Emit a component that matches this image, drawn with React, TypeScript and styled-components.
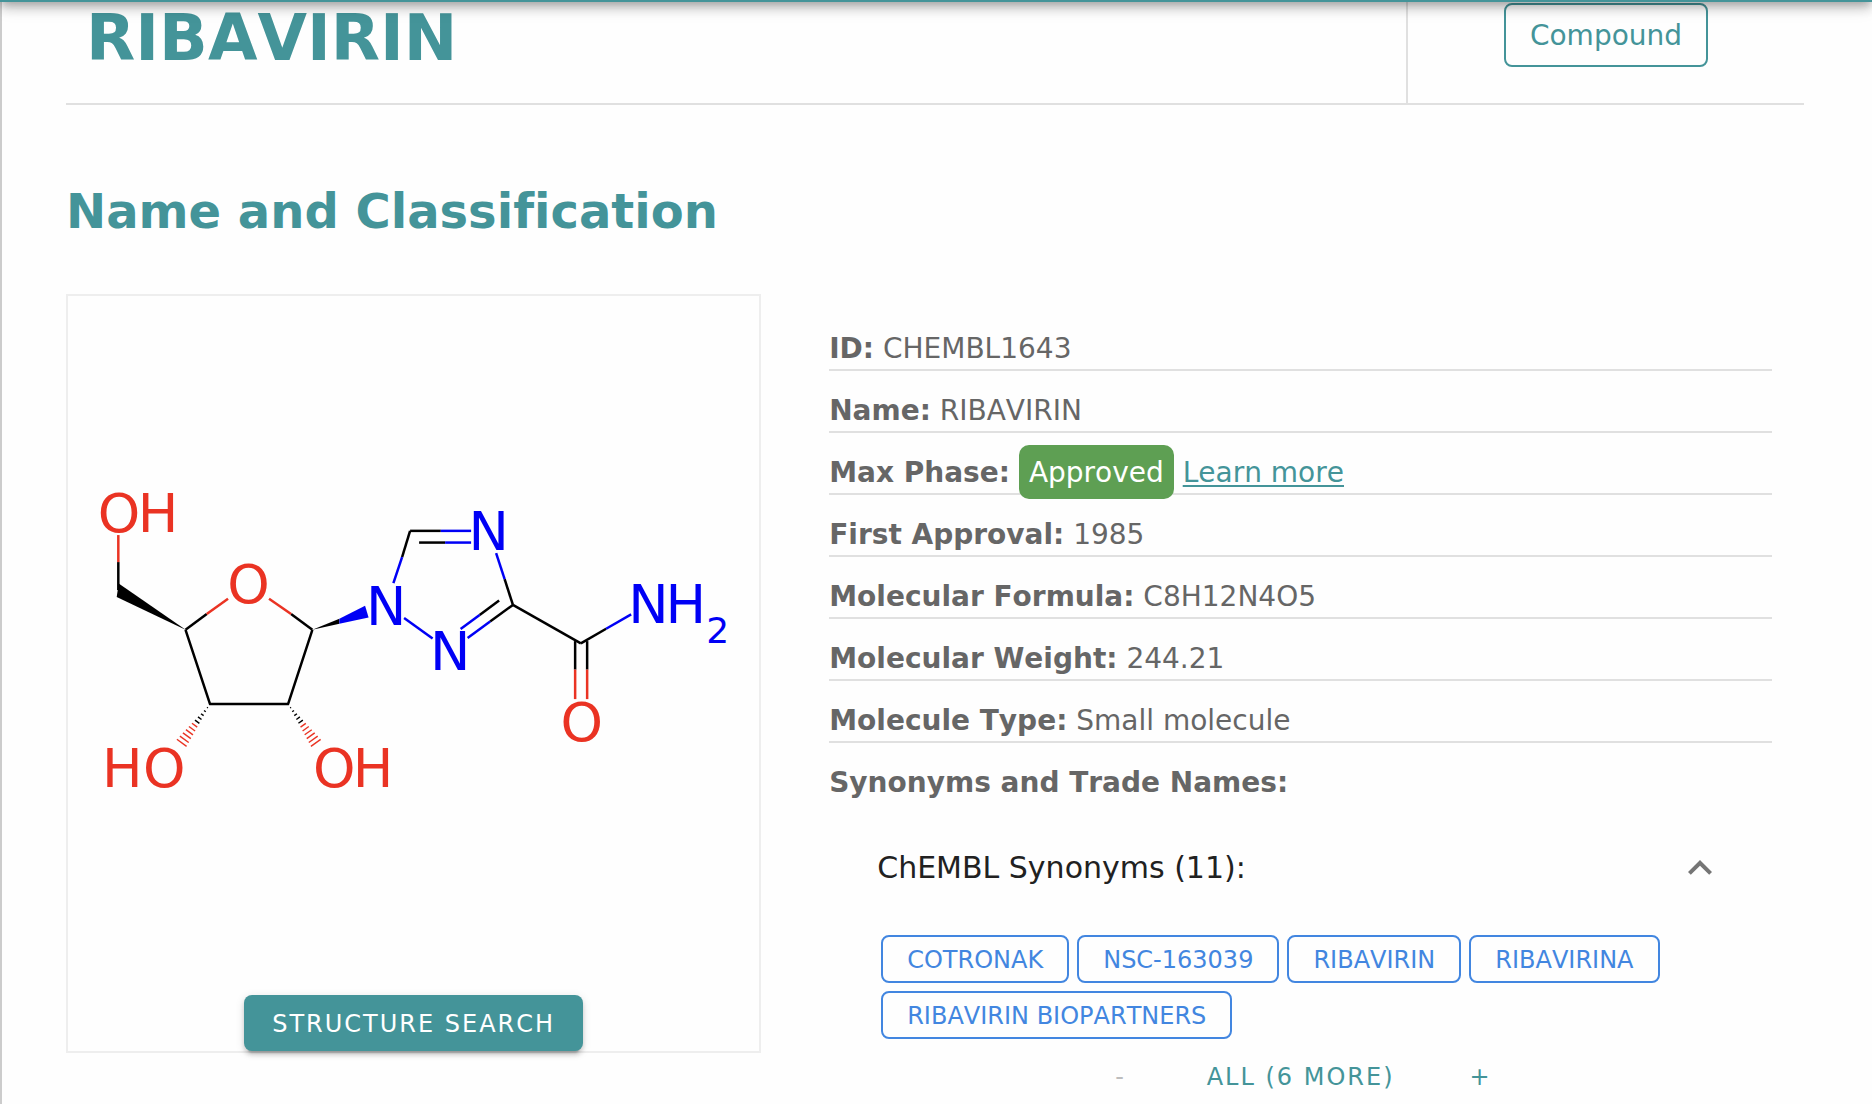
import React, { useState } from "react";
import styled, { createGlobalStyle } from "styled-components";

const teal = "#449499";
const blue = "#4286e0";
const line = "#e0e0e0";

const GlobalStyle = createGlobalStyle`
  *, *::before, *::after { box-sizing: border-box; }
  body {
    margin: 0;
    background: #fefefe;
    color: #666;
    font-family: Verdana, "DejaVu Sans", sans-serif;
    font-size: 28px;
    line-height: 40px;
    font-kerning: none;
    font-variant-ligatures: none;
    overflow-x: hidden;
  }
`;

const TopBar = styled.div`
  position: fixed;
  top: -110px;
  left: 0;
  right: 0;
  height: 112px;
  z-index: 2;
  background: ${teal};
  box-shadow:
    0 4px 8px -2px rgba(0, 0, 0, 0.2),
    0 8px 10px 0 rgba(0, 0, 0, 0.14),
    0 2px 20px 0 rgba(0, 0, 0, 0.12);
`;

const Page = styled.main`
  min-height: 100vh;
  padding: 0 68px 0 64px;
  border-left: 2px solid #cccccc;
`;

const Header = styled.header`
  display: flex;
  border-bottom: 2px solid ${line};
`;

const Title = styled.h1`
  flex: 1;
  margin: 0;
  padding: 2px 20px 29px;
  color: ${teal};
  font-size: 64px;
  line-height: 72px;
`;

const HeaderSide = styled.div`
  display: flex;
  justify-content: center;
  align-items: flex-start;
  width: 398px;
  padding-top: 3px;
  border-left: 2px solid ${line};
`;

const EntityButton = styled.button`
  height: 64px;
  padding: 2px 24px 0;
  border: 2px solid ${teal};
  border-radius: 8px;
  background: transparent;
  color: ${teal};
  font: inherit;
`;

const SectionTitle = styled.h2`
  margin: 76px 0 53px;
  color: ${teal};
  font-size: 48px;
  line-height: 60px;
`;

const Columns = styled.div`
  display: grid;
  grid-template-columns: 40% 60%;
  align-items: start;
`;

const StructureCard = styled.section`
  display: flex;
  flex-direction: column;
  align-items: center;
  gap: 8px;
  border: 2px solid #eeeeee;
`;

const Drawing = styled.svg`
  display: block;
  width: 100%;
  font-family: "DejaVu Sans", sans-serif;
  font-size: 54px;
`;

const SearchButton = styled.button`
  height: 56px;
  padding: 2px 28px 0;
  border: 0;
  border-radius: 8px;
  background: ${teal};
  color: #fff;
  font: inherit;
  font-size: 24px;
  letter-spacing: 2px;
  box-shadow:
    0 6px 2px -4px rgba(0, 0, 0, 0.2),
    0 4px 4px 0 rgba(0, 0, 0, 0.14),
    0 2px 10px 0 rgba(0, 0, 0, 0.12);
`;

const Details = styled.section`
  padding: 15px 32px 0 68px;
`;

const Fields = styled.dl`
  margin: 0;
`;

const Field = styled.div`
  padding-top: 20px;
  border-bottom: 2px solid ${line};
  white-space: nowrap;
`;

const Label = styled.dt`
  display: inline;
  font-weight: bold;
`;

const Value = styled.dd`
  display: inline;
  margin: 0;
`;

const Phase = styled.span`
  padding: 11px 10px 10px;
  border-radius: 10px;
  background: #5e9f53;
  color: #fff;
`;

const Link = styled.a`
  color: ${teal};
  text-underline-offset: 3px;
  text-decoration-thickness: 2px;
`;

const SynonymsTitle = styled.h3`
  margin: 0;
  padding-top: 20px;
  font-size: 28px;
  line-height: 40px;
`;

const PanelToggle = styled.button`
  display: flex;
  justify-content: space-between;
  align-items: center;
  width: 100%;
  height: 96px;
  margin-top: 16px;
  padding: 2px 48px 0;
  border: 0;
  background: none;
  color: #212121;
  font: inherit;
  font-size: 30px;
  text-align: left;
`;

const Chevron = styled.svg<{ $open: boolean }>`
  width: 48px;
  height: 48px;
  fill: #757575;
  transform: ${(p) => (p.$open ? "none" : "rotate(180deg)")};
`;

const Chips = styled.div`
  display: flex;
  flex-wrap: wrap;
  gap: 8px;
  padding: 20px 52px 16px;
`;

const Chip = styled.button`
  height: 48px;
  padding: 2px 24px 0;
  border: 2px solid ${blue};
  border-radius: 8px;
  background: transparent;
  color: ${blue};
  font: inherit;
  font-size: 24px;
`;

const Pager = styled.div`
  display: flex;
  justify-content: center;
`;

const PagerButton = styled.button<{ $wide?: boolean }>`
  width: ${(p) => (p.$wide ? "232px" : "128px")};
  height: 40px;
  padding: 2px 0 0;
  border: 0;
  background: none;
  color: ${teal};
  font: inherit;
  font-size: 24px;
  letter-spacing: 2px;
  &:disabled { color: #bdbdbd; }
`;

type Bond = [number, number, number, number];

const carbonBonds: Bond[] = [
  [118.3, 562, 118.3, 590],
  [185.5, 629.7, 206.7, 614],
  [291, 614, 312.3, 629.7],
  [410, 530.8, 402, 557],
  [410, 530.8, 440.7, 530.8],
  [419, 542.5, 445, 542.5],
  [504.5, 579, 512.8, 604.8],
  [512.8, 604.8, 490, 621.5],
  [499, 600.5, 479.5, 615],
  [512.8, 604.8, 580.7, 643.3],
  [580.7, 643.3, 606, 628.7],
  [575, 641, 575, 669.5],
  [587, 641, 587, 669.5],
];
const oxygenBonds: Bond[] = [
  [118.3, 535, 118.3, 562],
  [206.7, 614, 228, 598.7],
  [269, 598.7, 291, 614],
  [575, 669.5, 575, 699],
  [587, 669.5, 587, 699],
];
const nitrogenBonds: Bond[] = [
  [402, 557, 393.3, 583],
  [440.7, 530.8, 471, 530.8],
  [445, 542.5, 471, 542.5],
  [496, 553, 504.5, 579],
  [490, 621.5, 467.5, 638],
  [479.5, 615, 460.5, 629],
  [404, 618, 432.5, 638.5],
  [606, 628.7, 631, 614.3],
];

const Bonds = ({ items, color }: { items: Bond[]; color: string }) => (
  <g stroke={color} strokeWidth="2.5" strokeLinecap="butt">
    {items.map(([x1, y1, x2, y2], i) => (
      <line key={i} x1={x1} y1={y1} x2={x2} y2={y2} />
    ))}
  </g>
);

const HashedBond = ({ x1, y1, x2, y2 }: { x1: number; y1: number; x2: number; y2: number }) => {
  const count = 11;
  const length = Math.hypot(x2 - x1, y2 - y1);
  const nx = -(y2 - y1) / length;
  const ny = (x2 - x1) / length;
  return (
    <g strokeWidth="1.4">
      {Array.from({ length: count }, (_, k) => {
        const t = (k + 1) / count;
        const cx = x1 + (x2 - x1) * t;
        const cy = y1 + (y2 - y1) * t;
        const half = 6 * t;
        return (
          <line
            key={k}
            x1={cx - nx * half}
            y1={cy - ny * half}
            x2={cx + nx * half}
            y2={cy + ny * half}
            stroke={k < 5 ? "#000" : "#ea3323"}
          />
        );
      })}
    </g>
  );
};

const Molecule = () => (
  <Drawing viewBox="68 296 691 691" role="img" aria-label="Structure of ribavirin">
    <Bonds items={carbonBonds} color="#000" />
    <Bonds items={oxygenBonds} color="#ea3323" />
    <Bonds items={nitrogenBonds} color="#0000f5" />
    <path
      d="M185.5 629.7 L210 704 H288 L312.3 629.7"
      fill="none"
      stroke="#000"
      strokeWidth="2.5"
      strokeLinejoin="round"
    />
    <path d="M118.7 583.3 L116.7 597 L186 630 Z" />
    <path d="M312.3 629.7 L339.3 618.7 V623.7 Z" />
    <path d="M339.3 618.7 L365 605.7 L368.5 617.3 L339.3 623.7 Z" fill="#0000f5" />
    <HashedBond x1={210} y1={704} x2={181.7} y2={742.7} />
    <HashedBond x1={288} y1={704} x2={315.7} y2={742.7} />
    <g fill="#ea3323">
      <text x="97.7 137.7" y="531.7">OH</text>
      <text x="227.3" y="603.3">O</text>
      <text x="102 143" y="787">HO</text>
      <text x="313 352.7" y="787">OH</text>
      <text x="560.3" y="741">O</text>
    </g>
    <g fill="#0000f5">
      <text x="366" y="625">N</text>
      <text x="468.4" y="550">N</text>
      <text x="430" y="670">N</text>
      <text x="628 665.4" y="623.3">NH</text>
      <text x="706" y="643" fontSize="36">2</text>
    </g>
  </Drawing>
);

const App = () => {
  const [open, setOpen] = useState(true);
  const synonyms = ["COTRONAK", "NSC-163039", "RIBAVIRIN", "RIBAVIRINA", "RIBAVIRIN BIOPARTNERS"];
  const fields: [string, React.ReactNode][] = [
    ["ID:", "CHEMBL1643"],
    ["Name:", "RIBAVIRIN"],
    [
      "Max Phase:",
      <>
        <Phase>Approved</Phase> <Link href="#max-phase">Learn more</Link>
      </>,
    ],
    ["First Approval:", "1985"],
    ["Molecular Formula:", "C8H12N4O5"],
    ["Molecular Weight:", "244.21"],
    ["Molecule Type:", "Small molecule"],
  ];

  return (
    <>
      <GlobalStyle />
      <TopBar />
      <Page>
        <Header>
          <Title>RIBAVIRIN</Title>
          <HeaderSide>
            <EntityButton type="button">Compound</EntityButton>
          </HeaderSide>
        </Header>
        <SectionTitle>Name and Classification</SectionTitle>
        <Columns>
          <StructureCard>
            <Molecule />
            <SearchButton type="button">STRUCTURE SEARCH</SearchButton>
          </StructureCard>
          <Details>
            <Fields>
              {fields.map(([label, value]) => (
                <Field key={label}>
                  <Label>{label}</Label> <Value>{value}</Value>
                </Field>
              ))}
            </Fields>
            <SynonymsTitle>Synonyms and Trade Names:</SynonymsTitle>
            <PanelToggle type="button" aria-expanded={open} onClick={() => setOpen(!open)}>
              ChEMBL Synonyms (11):
              <Chevron $open={open} viewBox="0 0 24 24" aria-hidden="true">
                <path d="M7.41 15.41 12 10.83l4.59 4.58L18 14l-6-6-6 6z" />
              </Chevron>
            </PanelToggle>
            {open && (
              <>
                <Chips>
                  {synonyms.map((name) => (
                    <Chip key={name} type="button">{name}</Chip>
                  ))}
                </Chips>
                <Pager>
                  <PagerButton type="button" disabled>-</PagerButton>
                  <PagerButton type="button" $wide>ALL (6 MORE)</PagerButton>
                  <PagerButton type="button">+</PagerButton>
                </Pager>
              </>
            )}
          </Details>
        </Columns>
      </Page>
    </>
  );
};

export default App;
